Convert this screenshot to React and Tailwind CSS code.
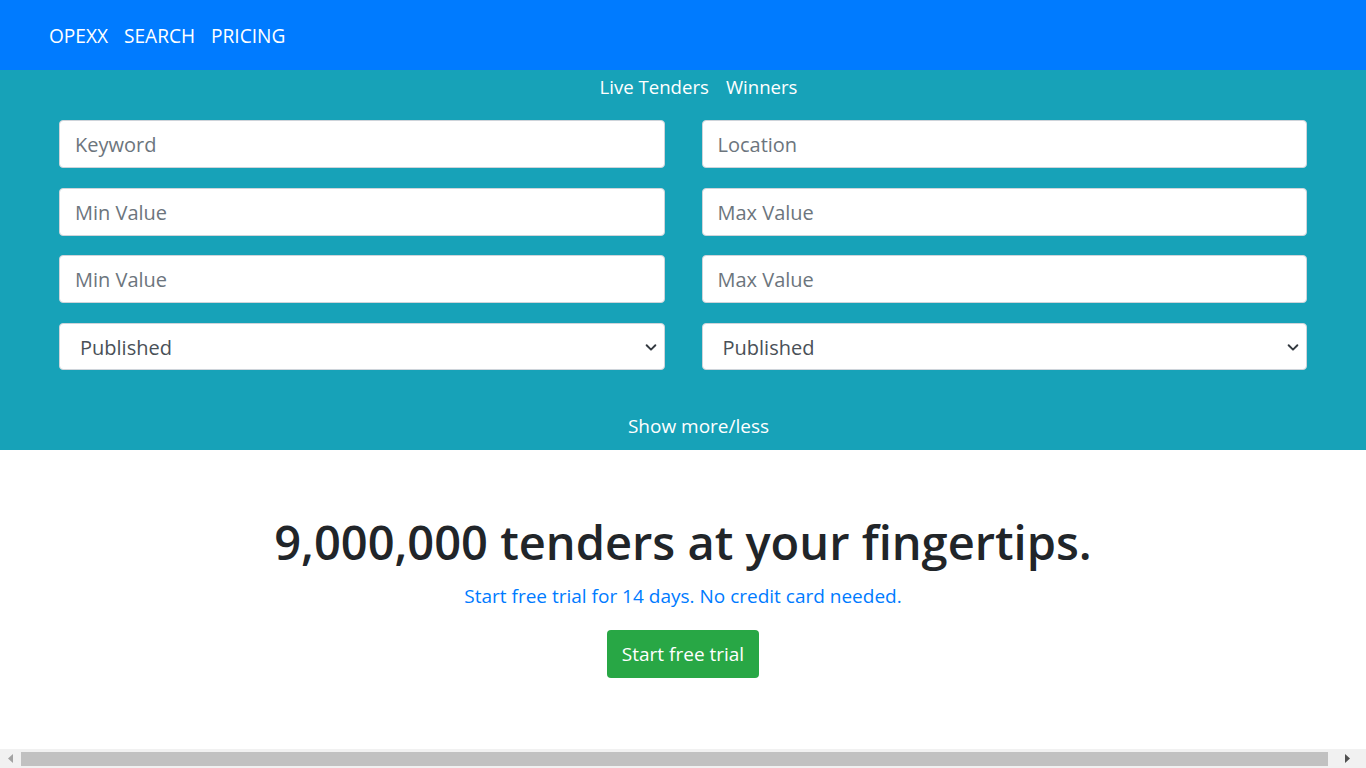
import React from "react";

const font = { fontFamily: '"Open Sans", "Noto Sans", sans-serif' };

function Field({ placeholder }) {
  return (
    <div className="h-[48px] rounded-[4px] border border-[#ced4da] bg-white flex items-center px-[15px] text-[20px] text-[#6c757d]">
      <span className="translate-y-[1px]">{placeholder}</span>
    </div>
  );
}

function Select() {
  return (
    <div className="h-[47px] rounded-[4px] border border-[#ced4da] bg-white flex items-center justify-between pl-[20px] pr-[6px] text-[20px] text-[#495057]">
      <span className="translate-y-[1px]">Published</span>
      <svg width="14" height="14" viewBox="0 0 16 16" fill="none" stroke="#343a40" strokeWidth="2.2" strokeLinecap="round" strokeLinejoin="round">
        <path d="M3 6l5 5 5-5" />
      </svg>
    </div>
  );
}

export default function App() {
  return (
    <div className="w-[1366px] h-[768px] overflow-hidden flex flex-col bg-white" style={font}>
      <nav className="h-[70px] bg-[#007bff] flex items-center pl-[49px] gap-[16px] text-white text-[19.1px]">
        <span className="translate-y-[1px]">OPEXX</span>
        <span className="translate-y-[1px]">SEARCH</span>
        <span className="translate-y-[1px]">PRICING</span>
      </nav>
      <section className="h-[380px] bg-[#17a2b8] flex flex-col">
        <div className="flex justify-center gap-[17px] text-white text-[18.6px] h-[33px] items-center pl-[31px]">
          <span>Live Tenders</span>
          <span>Winners</span>
        </div>
        <div className="grid grid-cols-2 gap-x-[37px] gap-y-[19.7px] px-[59px] mt-[17px]">
          <Field placeholder="Keyword" />
          <Field placeholder="Location" />
          <Field placeholder="Min Value" />
          <Field placeholder="Max Value" />
          <Field placeholder="Min Value" />
          <Field placeholder="Max Value" />
          <Select />
          <Select />
        </div>
        <div className="flex justify-center mt-[42px] text-white text-[19px] pl-[31px]">
          <span>Show more/less</span>
        </div>
      </section>
      <main className="flex-1 flex flex-col items-center pt-[64px]">
        <h1 className="text-[47px] leading-[1.2] font-semibold text-[#212529]">
          9,000,000 tenders at your fingertips.
        </h1>
        <p className="text-[19px] text-[#007bff] mt-[12px]">
          Start free trial for 14 days. No credit card needed.
        </p>
        <button className="mt-[19px] h-[48px] px-[15px] rounded-[4px] bg-[#28a745] text-white text-[19px]">
          Start free trial
        </button>
      </main>
      <div className="h-[19px] bg-[#f1f1f1] flex items-center">
        <div className="w-[21px] flex justify-center">
          <svg width="6" height="9" viewBox="0 0 6 9"><path d="M5 0L0 4.5 5 9z" fill="#a3a3a3" /></svg>
        </div>
        <div className="flex-1 h-[14px] bg-[#c1c1c1]" />
        <div className="w-[38px] flex justify-center">
          <svg width="6" height="9" viewBox="0 0 6 9"><path d="M1 0l5 4.5L1 9z" fill="#505050" /></svg>
        </div>
      </div>
    </div>
  );
}
